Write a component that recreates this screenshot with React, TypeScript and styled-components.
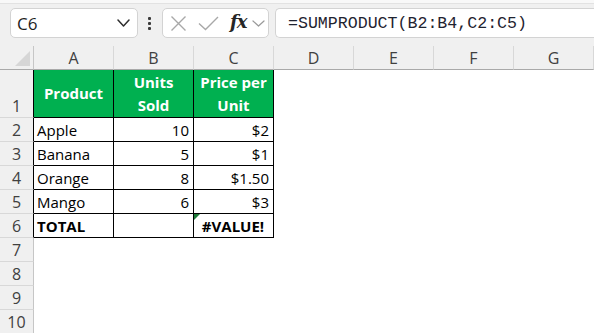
import React from "react";
import styled, { createGlobalStyle, css } from "styled-components";

const Global = createGlobalStyle`
  html, body { margin: 0; padding: 0; background: #ffffff; }
  body { font-family: "Open Sans", "Liberation Sans", sans-serif; overflow: hidden; }
`;

const Page = styled.div`
  width: 594px;
  height: 333px;
  overflow: hidden;
  background: #ffffff;
`;

const Toolbar = styled.div`
  height: 46px;
  box-sizing: border-box;
  background: #f0f0f0;
  border-top: 3px solid #f8f8f8;
  box-shadow: inset 0 1px 0 #e2e2e2;
  display: flex;
  align-items: flex-start;
  padding: 5px 0 0 10px;
  gap: 0;
`;

const Field = styled.div<{ $w?: number; $ml?: number }>`
  height: 30px;
  box-sizing: border-box;
  background: #ffffff;
  border: 1px solid #d3d3d3;
  border-radius: 5px;
  display: flex;
  align-items: center;
  flex: none;
  ${(p) => (p.$w ? css`width: ${p.$w}px;` : css`flex: 1; border-right: none; border-radius: 5px 0 0 5px;`)}
  margin-left: ${(p) => p.$ml ?? 0}px;
`;

const NameText = styled.span`
  font-size: 17px;
  color: #1e1e1e;
  padding-left: 6px;
  flex: 1;
`;

const Dots = styled.div`
  margin-left: 10px;
  height: 30px;
  display: flex;
  flex-direction: column;
  justify-content: center;
  gap: 2px;
  & > i {
    display: block;
    width: 3px;
    height: 3px;
    background: #3a3a3a;
    border-radius: 1px;
  }
`;

const IconSlot = styled.span<{ $ml: number }>`
  display: flex;
  align-items: center;
  margin-left: ${(p) => p.$ml}px;
`;

const Fx = styled.span`
  font-family: "DejaVu Serif", "Liberation Serif", serif;
  font-style: italic;
  font-weight: bold;
  font-size: 18px;
  color: #262626;
  margin-left: 11px;
  line-height: 1;
  letter-spacing: -1px;
  padding-bottom: 2px;
`;

const FormulaText = styled.span`
  font-family: "Liberation Mono", "DejaVu Sans Mono", monospace;
  font-size: 16.6px;
  color: #1f2330;
  padding-left: 12px;
  white-space: pre;
`;

const Sheet = styled.div`
  display: grid;
  grid-template-columns: 34px repeat(7, 80px);
  grid-template-rows: 24px 48px repeat(9, 24px);
  font-size: 15px;
`;

const headerBg = "#f0f0f0";

const Corner = styled.div`
  background: ${headerBg};
  box-sizing: border-box;
  border-right: 1px solid #c6c6c6;
  border-bottom: 1px solid #a9a9a9;
  display: flex;
  align-items: flex-end;
  justify-content: flex-end;
  padding: 0 3px 3px 0;
`;

const ColHeader = styled.div`
  background: ${headerBg};
  box-sizing: border-box;
  border-right: 1px solid #d8d8d8;
  border-bottom: 1px solid #a9a9a9;
  display: flex;
  align-items: center;
  justify-content: center;
  color: #404040;
  font-size: 16px;
  padding-top: 1px;
`;

const RowHeader = styled.div<{ $edge?: boolean }>`
  background: ${headerBg};
  box-sizing: border-box;
  border-right: 1px solid ${(p) => (p.$edge ? "#000000" : "#c6c6c6")};
  border-bottom: 1px solid #d8d8d8;
  display: flex;
  align-items: flex-end;
  justify-content: center;
  color: #404040;
  font-size: 16px;
  line-height: 22px;
`;

type Align = "left" | "right" | "center";

const Cell = styled.div<{ $boxed?: boolean; $head?: boolean; $bold?: boolean; $align?: Align }>`
  box-sizing: border-box;
  position: relative;
  display: flex;
  padding: 0 4px 0 3px;
  color: #000000;
  line-height: 21px;
  align-items: flex-end;
  justify-content: ${(p) =>
    p.$align === "right" ? "flex-end" : p.$align === "center" ? "center" : "flex-start"};
  ${(p) =>
    p.$boxed &&
    css`
      border-right: 1px solid #000000;
      border-bottom: 1px solid #000000;
    `}
  ${(p) => p.$bold && css`font-weight: 700;`}
  ${(p) =>
    p.$head &&
    css`
      background: #00b050;
      color: #ffffff;
      font-weight: 700;
      align-items: center;
      text-align: center;
      line-height: 23px;
      padding: 0 2px;
    `}
`;

const ErrorFlag = styled.span`
  position: absolute;
  left: 0;
  top: 0;
  width: 0;
  height: 0;
  border-top: 6px solid #1d7b38;
  border-right: 6px solid transparent;
`;

const Chevron = ({ color, w, h, sw }: { color: string; w: number; h: number; sw: number }) => (
  <svg width={w} height={h} viewBox={`0 0 ${w} ${h}`} fill="none">
    <polyline
      points={`1,1 ${w / 2},${h - 1} ${w - 1},1`}
      stroke={color}
      strokeWidth={sw}
      strokeLinecap="round"
      strokeLinejoin="round"
    />
  </svg>
);

const columns = ["A", "B", "C", "D", "E", "F", "G"];

type Row = { a: string; b: string; c: string; total?: boolean };
const rows: Row[] = [
  { a: "Apple", b: "10", c: "$2" },
  { a: "Banana", b: "5", c: "$1" },
  { a: "Orange", b: "8", c: "$1.50" },
  { a: "Mango", b: "6", c: "$3" },
  { a: "TOTAL", b: "", c: "#VALUE!", total: true },
];

export default function App() {
  return (
    <Page>
      <Global />
      <Toolbar>
        <Field $w={128}>
          <NameText>C6</NameText>
          <IconSlot $ml={0} style={{ marginRight: 7 }}>
            <Chevron color="#2e2e2e" w={13} h={8} sw={1.5} />
          </IconSlot>
        </Field>
        <Dots>
          <i />
          <i />
          <i />
        </Dots>
        <Field $w={107} $ml={11}>
          <IconSlot $ml={7}>
            <svg width="17" height="17" viewBox="0 0 17 17" fill="none">
              <path d="M1.5 1.5 L15.5 15.5 M15.5 1.5 L1.5 15.5" stroke="#a8a8a8" strokeWidth="1.4" />
            </svg>
          </IconSlot>
          <IconSlot $ml={11}>
            <svg width="21" height="15" viewBox="0 0 21 15" fill="none">
              <path d="M1 7.5 L7.5 13.5 L20 1" stroke="#a8a8a8" strokeWidth="1.4" fill="none" />
            </svg>
          </IconSlot>
          <Fx>fx</Fx>
          <IconSlot $ml={6}>
            <Chevron color="#9a9a9a" w={13} h={7} sw={1.2} />
          </IconSlot>
        </Field>
        <Field $ml={6}>
          <FormulaText>=SUMPRODUCT(B2:B4,C2:C5)</FormulaText>
        </Field>
      </Toolbar>
      <Sheet>
        <Corner>
          <svg width="15" height="15" viewBox="0 0 15 15">
            <polygon points="15,0 15,15 0,15" fill="#d6d6d6" />
          </svg>
        </Corner>
        {columns.map((c) => (
          <ColHeader key={c}>{c}</ColHeader>
        ))}

        <RowHeader $edge>1</RowHeader>
        <Cell $boxed $head $align="center">Product</Cell>
        <Cell $boxed $head $align="center">
          Units
          <br />
          Sold
        </Cell>
        <Cell $boxed $head $align="center">
          Price per
          <br />
          Unit
        </Cell>
        {columns.slice(3).map((c) => (
          <Cell key={c} />
        ))}

        {rows.map((r, i) => (
          <React.Fragment key={r.a}>
            <RowHeader $edge>{i + 2}</RowHeader>
            <Cell $boxed $bold={r.total}>{r.a}</Cell>
            <Cell $boxed $align="right">{r.b}</Cell>
            <Cell $boxed $align={r.total ? "center" : "right"} $bold={r.total}>
              {r.total && <ErrorFlag />}
              {r.c}
            </Cell>
            {columns.slice(3).map((c) => (
              <Cell key={c} />
            ))}
          </React.Fragment>
        ))}

        {[7, 8, 9, 10].map((n) => (
          <React.Fragment key={n}>
            <RowHeader>{n}</RowHeader>
            {columns.map((c) => (
              <Cell key={c} />
            ))}
          </React.Fragment>
        ))}
      </Sheet>
    </Page>
  );
}
